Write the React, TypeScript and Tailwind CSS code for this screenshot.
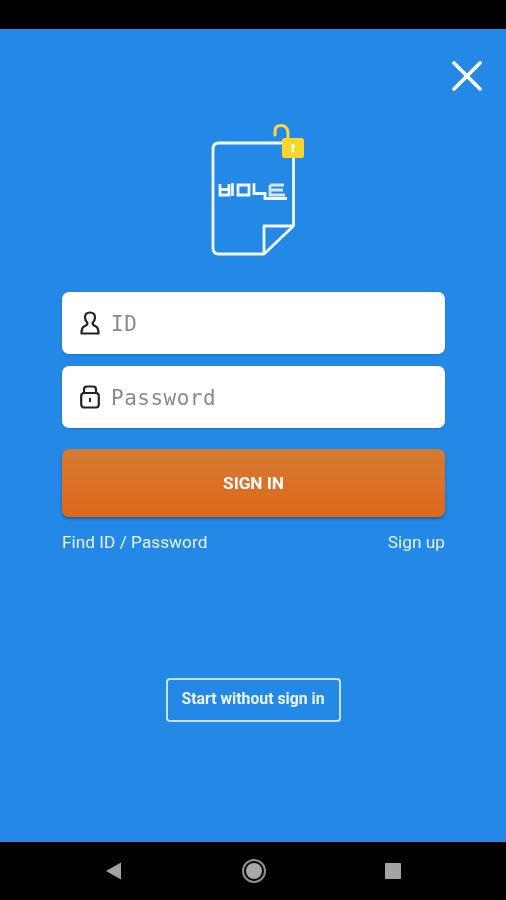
import { X } from 'lucide-react';

function Logo() {
  return (
    <svg viewBox="205 120 104 140" className="w-[104px] h-[140px]" fill="none">
      <path
        d="M283 143H219Q213 143 213 149V248Q213 254 219 254H264L293.500 226V158"
        stroke="#f2f8fe"
        strokeWidth="2.800"
        strokeLinejoin="round"
      />
      <path d="M293.500 226H264V254" stroke="#f2f8fe" strokeWidth="2.800" strokeLinejoin="round" />
      {/* wordmark */}
      <path
        d="M220 184V195H229V184M220 189.500H229M232.500 183V196M238 185H249V195H238ZM254 183V193.500H265V198.500H287"
        stroke="#f2f8fe"
        strokeWidth="2.800"
      />
      <path d="M270 185H284M270 185V195H285M270 190H283" stroke="#d5e5f8" strokeWidth="2.800" />
      {/* open lock */}
      <path d="M275 135V131Q275 125.500 281 125.500Q287.500 125.500 288 133V140" stroke="#f4dc3c" strokeWidth="3" strokeLinecap="round" />
      <rect x="282" y="138" width="22" height="20" rx="2.500" fill="#fad52e" />
      <circle cx="293" cy="146" r="2" fill="#fff" />
      <rect x="292" y="146" width="2" height="6" fill="#fff" />
    </svg>
  );
}

function UserIcon() {
  return (
    <svg viewBox="0 0 20 24" className="w-[20px] h-[24px]" fill="none" stroke="#222" strokeWidth="2.200" strokeLinejoin="round">
      <path d="M10 1.500C6 1.500 5 4 5 6.500C5 9 6 10.500 7.400 11.800C7.800 13.500 6.500 14.500 4 15.500C2 16.500 1.500 18 1.500 22.500H18.500C18.500 18 18 16.500 16 15.500C13.500 14.500 12.200 13.500 12.600 11.800C14 10.500 15 9 15 6.500C15 4 14 1.500 10 1.500Z" />
    </svg>
  );
}

function LockIcon() {
  return (
    <svg viewBox="0 0 20 24" className="w-[20px] h-[24px]" fill="none" stroke="#222" strokeWidth="2.200">
      <rect x="1.200" y="8" width="17.600" height="14.500" rx="3" />
      <path d="M4 8V4.500Q4 1.500 7 1.500H13Q16 1.500 16 4.500V8" />
      <rect x="9" y="13" width="2" height="4" fill="#222" stroke="none" />
    </svg>
  );
}

function Field({ icon, label }: { icon: React.ReactNode; label: string }) {
  return (
    <div className="h-[62px] bg-white rounded-[7px] flex items-center pl-[18px] gap-[11px] shadow-[0_1px_2px_rgba(0,0,0,0.15)]">
      {icon}
      <span className="pt-[4px] font-['DejaVu_Sans_Mono',monospace] text-[21px] tracking-[0.500px] text-[#8a8a8a]">{label}</span>
    </div>
  );
}

export default function App() {
  return (
    <div className="w-[506px] h-[900px] flex flex-col bg-black font-['Roboto',sans-serif] overflow-hidden blur-[0.5px]">
      <div className="h-[29px] bg-black" />
      <main className="h-[813px] bg-[#2488e6] flex flex-col">
        <div className="flex justify-end pt-[21px] pr-[13px]">
          <X className="w-[52px] h-[52px] text-white" strokeWidth={1.700} />
        </div>
        <div className="flex justify-center mt-[18px] pl-[8px]">
          <Logo />
        </div>
        <div className="mt-[32px] ml-[62px] w-[383px] flex flex-col">
          <Field icon={<UserIcon />} label="ID" />
          <div className="h-[12px]" />
          <Field icon={<LockIcon />} label="Password" />
          <button className="mt-[21px] h-[68px] pt-[2px] rounded-[7px] bg-gradient-to-b from-[#d57a33] to-[#df6718] text-white font-bold text-[17.200px] shadow-[0_2px_3px_rgba(0,0,0,0.3)]">
            SIGN IN
          </button>
          <div className="mt-[13px] flex justify-between text-[17.300px] leading-[24px] text-[#e8f2fc]">
            <span>Find ID / Password</span>
            <span>Sign up</span>
          </div>
        </div>
        <div className="flex justify-center mt-[124px]">
          <button className="w-[175px] h-[44px] pb-[3px] rounded-[4px] border-2 border-[#c9e2fa] text-[#eef6fe] font-bold text-[15.800px]">
            Start without sign in
          </button>
        </div>
      </main>
      <nav className="flex-1 bg-black flex items-center">
        <svg viewBox="0 0 16 18" className="w-[15px] h-[18px] ml-[106px]">
          <path d="M16 0V18L0 9Z" fill="#a3a3a3" />
        </svg>
        <div className="ml-[121px] w-[24px] h-[24px] rounded-full border-2 border-[#8f8f8f] flex items-center justify-center">
          <div className="w-[16px] h-[16px] rounded-full bg-[#a8a8a8]" />
        </div>
        <div className="ml-[119px] w-[16px] h-[16px] rounded-[1px] bg-[#a3a3a3]" />
      </nav>
    </div>
  );
}
